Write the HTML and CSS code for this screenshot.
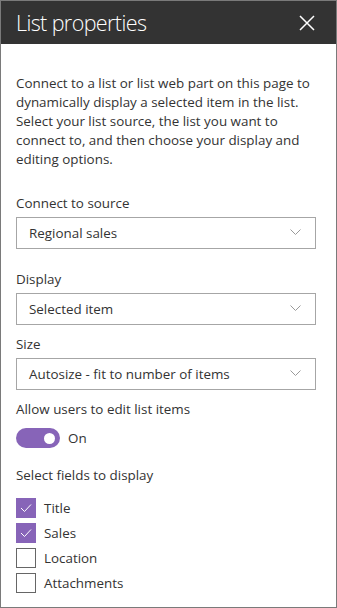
FILE: index.html
```html
<!DOCTYPE html>
<html lang="en">
<head>
<meta charset="utf-8">
<title>List properties</title>
<link rel="stylesheet" href="styles.css">
</head>
<body>
<div class="panel">
  <header class="panel-header">
    <h1 class="panel-title">List properties</h1>
    <button class="close-btn" aria-label="Close">
      <svg width="16" height="16" viewBox="0 0 16 16"><path d="M1 1 L15 15 M15 1 L1 15" stroke="#fff" stroke-width="1.5" fill="none"/></svg>
    </button>
  </header>
  <div class="panel-body">
    <p class="description">Connect to a list or list web part on this page to dynamically display a selected item in the list. Select your list source, the list you want to connect to, and then choose your display and editing options.</p>

    <div class="field field-first">
      <div class="label">Connect to source</div>
      <div class="dropdown"><span>Regional sales</span><svg class="chev" width="11" height="7" viewBox="0 0 11 7"><path d="M0.5 0.5 L5.5 5.5 L10.5 0.5" stroke="#9a9a9a" stroke-width="1" fill="none"/></svg></div>
    </div>

    <div class="field field-display">
      <div class="label">Display</div>
      <div class="dropdown"><span>Selected item</span><svg class="chev" width="11" height="7" viewBox="0 0 11 7"><path d="M0.5 0.5 L5.5 5.5 L10.5 0.5" stroke="#9a9a9a" stroke-width="1" fill="none"/></svg></div>
    </div>

    <div class="field field-size">
      <div class="label">Size</div>
      <div class="dropdown"><span>Autosize - fit to number of items</span><svg class="chev" width="11" height="7" viewBox="0 0 11 7"><path d="M0.5 0.5 L5.5 5.5 L10.5 0.5" stroke="#9a9a9a" stroke-width="1" fill="none"/></svg></div>
    </div>

    <div class="field field-toggle">
      <div class="label">Allow users to edit list items</div>
      <div class="toggle-row">
        <span class="toggle"><span class="knob"></span></span>
        <span class="toggle-text">On</span>
      </div>
    </div>

    <div class="field field-checks">
      <div class="label">Select fields to display</div>
      <ul class="checklist">
        <li><span class="box checked"><svg width="12" height="10" viewBox="0 0 12 10"><path d="M1 5 L4.5 8.5 L11 1.5" stroke="#fff" stroke-width="1" fill="none"/></svg></span>Title</li>
        <li><span class="box checked"><svg width="12" height="10" viewBox="0 0 12 10"><path d="M1 5 L4.5 8.5 L11 1.5" stroke="#fff" stroke-width="1" fill="none"/></svg></span>Sales</li>
        <li><span class="box"></span>Location</li>
        <li><span class="box"></span>Attachments</li>
      </ul>
    </div>
  </div>
</div>
</body>
</html>
```

FILE: styles.css
```css
* { box-sizing: border-box; }
html, body { margin: 0; padding: 0; background: #fff; }
body {
  font-family: "Open Sans", "Noto Sans", "Liberation Sans", sans-serif;
  color: #333;
  font-size: 13.4px;
}
.panel {
  width: 337px;
  height: 608px;
  border: 1px solid #7a7a7a;
  display: flex;
  flex-direction: column;
  background: #fff;
}
.panel-header {
  height: 43px;
  background: #333333;
  display: flex;
  align-items: center;
  justify-content: space-between;
  padding: 0 21px 0 15px;
}
.panel-title {
  margin: 0;
  font-weight: 300;
  font-size: 21.5px;
  color: #fff;
  line-height: 30px;
  letter-spacing: -0.6px;
}
.close-btn {
  background: none;
  border: 0;
  padding: 0;
  width: 16px;
  height: 16px;
  display: flex;
  cursor: pointer;
}
.panel-body {
  padding: 30px 18px 0 15px;
}
.description {
  margin: 0;
  line-height: 19px;
}
.label {
  line-height: 19px;
}
.field-first { margin-top: 25px; }
.field-display { margin-top: 21px; }
.field-size { margin-top: 10px; }
.field-toggle { margin-top: 10px; }
.field-checks { margin-top: 18px; }
.dropdown {
  margin-top: 4px;
  width: 300px;
  height: 32px;
  border: 1px solid #a6a6a6;
  display: flex;
  align-items: center;
  justify-content: space-between;
  padding: 0 14px 0 12px;
}
.chev { margin-top: -1px; }
.toggle-row {
  margin-top: 9px;
  display: flex;
  align-items: center;
  gap: 8px;
}
.toggle {
  width: 44px;
  height: 20px;
  border-radius: 10px;
  background: #8764b8;
  display: flex;
  align-items: center;
  justify-content: flex-end;
  padding-right: 5px;
}
.knob {
  width: 11px;
  height: 11px;
  border-radius: 50%;
  background: #fff;
}
.toggle-text { line-height: 20px; }
.checklist {
  list-style: none;
  margin: 13px 0 0;
  padding: 0;
  display: flex;
  flex-direction: column;
  gap: 5px;
}
.checklist li {
  display: flex;
  align-items: center;
  gap: 8px;
  height: 20px;
}
.box {
  width: 20px;
  height: 20px;
  border: 1px solid #666;
  display: flex;
  align-items: center;
  justify-content: center;
}
.box.checked {
  background: #8764b8;
  border-color: #8764b8;
}
```
